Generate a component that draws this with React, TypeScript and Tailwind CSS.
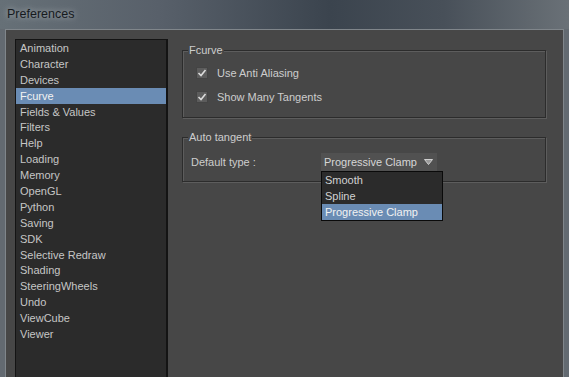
import React from 'react';

const categories = [
  'Animation', 'Character', 'Devices', 'Fcurve', 'Fields & Values', 'Filters', 'Help',
  'Loading', 'Memory', 'OpenGL', 'Python', 'Saving', 'SDK', 'Selective Redraw',
  'Shading', 'SteeringWheels', 'Undo', 'ViewCube', 'Viewer',
];

const tangentTypes = ['Smooth', 'Spline', 'Progressive Clamp'];

const Check: React.FC<{ label: string }> = ({ label }) => (
  <div className="flex items-center h-[12px]">
    <div className="w-[12px] h-[12px] bg-[#5c5c5c] border border-[#444444] flex items-center justify-center">
      <svg width="10" height="10" viewBox="0 0 10 10">
        <polyline points="1.5,5 4,7.5 8.5,2" fill="none" stroke="#dcdcdc" strokeWidth="1.6" />
      </svg>
    </div>
    <span className="ml-[9px]">{label}</span>
  </div>
);

const Group: React.FC<{ title: string; className: string; children: React.ReactNode }> = ({ title, className, children }) => (
  <div className={`relative border border-[#2c2c2c] shadow-[inset_1px_1px_0_#5d5d5d,1px_1px_0_#5d5d5d] ${className}`}>
    <span className="absolute -top-[8px] left-[5px] px-[1px] bg-[#474747] leading-[14px]">{title}</span>
    {children}
  </div>
);

const App: React.FC = () => {
  const selected = 'Fcurve';

  return (
    <div className="w-[569px] h-[377px] overflow-hidden flex flex-col bg-[#636a71] text-[11px] text-[#cdcdcd] font-['Liberation_Sans',Arial,sans-serif]">
      {/* title bar */}
      <div className="h-[29px] shrink-0 flex items-center pl-[7px] bg-[linear-gradient(90deg,#667077_0%,#58606a_28%,#3b444e_58%,#485059_78%,#6a7177_100%)]">
        <span className="text-[12.5px] text-[#161a1e] [text-shadow:0_0_6px_rgba(255,255,255,0.55)]">Preferences</span>
      </div>

      {/* client area */}
      <div className="flex-1 mx-[5px] border border-b-0 border-[#80868b] bg-[#474747] flex min-h-0">
        {/* category list */}
        <div className="ml-[9px] mt-[9px] w-[153px] h-[400px] shrink-0 bg-[#2b2b2b] border border-[#141414] border-r-2 flex flex-col">
          {categories.map((c) => (
            <div
              key={c}
              className={`h-[15.9px] leading-[16px] pl-[4px] ${c === selected ? 'bg-[#6a8cb4] text-[#f2f2f2]' : 'text-[#c6c6c6]'}`}
            >
              {c}
            </div>
          ))}
        </div>

        {/* settings panel */}
        <div className="flex-1 flex flex-col pl-[14px] pt-[20px]">
          <Group title="Fcurve" className="w-[364px] h-[68px] pt-[16px] pl-[13px] flex flex-col gap-[12px]">
            <Check label="Use Anti Aliasing" />
            <Check label="Show Many Tangents" />
          </Group>

          <Group title="Auto tangent" className="mt-[19px] w-[364px] h-[45px] pt-[15px] pl-[8px]">
            <div className="flex items-center h-[18px]">
              <span className="w-[130px]">Default type :</span>
              <div className="relative">
                <div className="w-[116px] h-[18px] bg-[#515151] flex items-center pl-[3px] text-[#d6d6d6]">
                  <span>Progressive Clamp</span>
                  <svg className="ml-[7px]" width="9" height="6" viewBox="0 0 9 6">
                    <polygon points="0.5,0.5 8.5,0.5 4.5,5.5" fill="#9a9a9a" stroke="#d0d0d0" strokeWidth="1" />
                  </svg>
                </div>
                <div className="absolute left-0 top-[18px] z-10 w-[122px] bg-[#2b2b2b] border border-[#0a0a0a] flex flex-col">
                  {tangentTypes.map((t) => (
                    <div
                      key={t}
                      className={`h-[16px] leading-[16px] pl-[3px] ${t === 'Progressive Clamp' ? 'bg-[#6a8cb4] text-[#f2f2f2]' : 'text-[#d2d2d2]'}`}
                    >
                      {t}
                    </div>
                  ))}
                </div>
              </div>
            </div>
          </Group>
        </div>
      </div>
    </div>
  );
};

export default App;
